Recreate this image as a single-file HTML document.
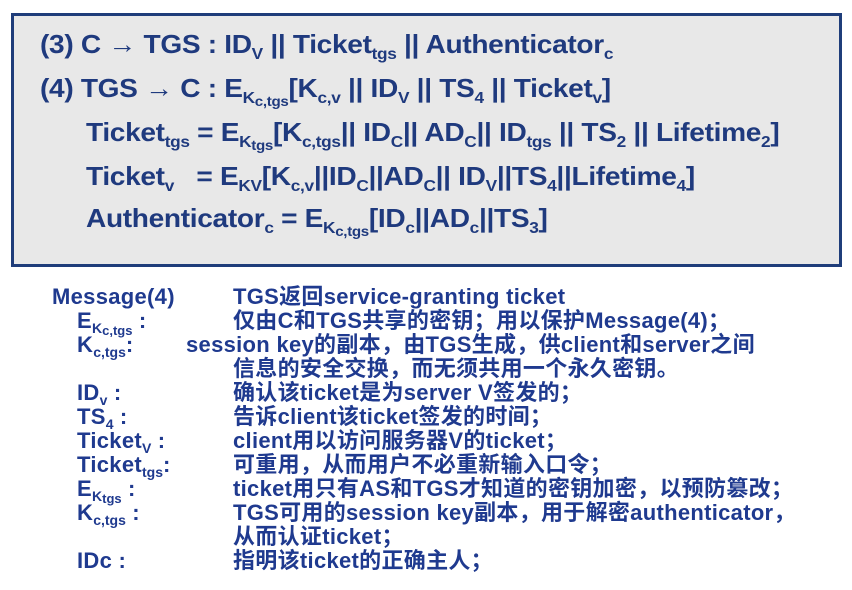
<!DOCTYPE html>
<html><head><meta charset="utf-8"><style>
body{margin:0;width:852px;height:590px;background:#fff;overflow:hidden;position:relative;font-family:"Liberation Sans","Noto Sans CJK SC",sans-serif;}
.box{position:absolute;left:11px;top:13px;width:825px;height:248px;background:#e8e8e8;border:3px solid #1f3d7a;}
.f{position:absolute;font-weight:bold;color:#1f3a7e;font-size:26px;white-space:nowrap;transform-origin:0 50%;transform:scaleX(1.08);letter-spacing:-0.3px;}
.f sub{font-size:16px;vertical-align:-6px;}
.f sub sub{font-size:14px;vertical-align:-3px;}
.t{position:absolute;font-weight:bold;color:#1f3a8f;font-size:22px;white-space:nowrap;line-height:24px;letter-spacing:0.3px;}
.t sub{font-size:14px;vertical-align:-5px;letter-spacing:0}
.t sub sub{font-size:13px;vertical-align:-2px}
</style></head><body>
<div class="box"></div>
<div class="f" style="left:40px;top:29px">(3) C → TGS : ID<sub>V</sub> || Ticket<sub>tgs</sub> || Authenticator<sub>c</sub></div>
<div class="f" style="left:40px;top:73px">(4) TGS → C : E<sub>K<sub>c,tgs</sub></sub>[K<sub>c,v</sub> || ID<sub>V</sub> || TS<sub>4</sub> || Ticket<sub>v</sub>]</div>
<div class="f" style="left:86px;top:117px">Ticket<sub>tgs</sub> = E<sub>K<sub>tgs</sub></sub>[K<sub>c,tgs</sub>|| ID<sub>C</sub>|| AD<sub>C</sub>|| ID<sub>tgs</sub> || TS<sub>2</sub> || Lifetime<sub>2</sub>]</div>
<div class="f" style="left:86px;top:161px">Ticket<sub>v</sub> &nbsp; = E<sub>KV</sub>[K<sub>c,v</sub>||ID<sub>C</sub>||AD<sub>C</sub>|| ID<sub>V</sub>||TS<sub>4</sub>||Lifetime<sub>4</sub>]</div>
<div class="f" style="left:86px;top:203px">Authenticator<sub>c</sub> = E<sub>K<sub>c,tgs</sub></sub>[ID<sub>c</sub>||AD<sub>c</sub>||TS<sub>3</sub>]</div>

<div class="t" style="left:52px;top:285px">Message(4)</div>
<div class="t" style="left:233px;top:285px">TGS返回service-granting ticket</div>
<div class="t" style="left:77px;top:309px">E<sub>K<sub>c,tgs</sub></sub> :</div>
<div class="t" style="left:233px;top:309px">仅由C和TGS共享的密钥；用以保护Message(4)；</div>
<div class="t" style="left:77px;top:333px">K<sub>c,tgs</sub>:</div>
<div class="t" style="left:186px;top:333px">session key的副本，由TGS生成，供client和server之间</div>
<div class="t" style="left:233px;top:357px">信息的安全交换，而无须共用一个永久密钥。</div>
<div class="t" style="left:77px;top:381px">ID<sub>v</sub> :</div>
<div class="t" style="left:233px;top:381px">确认该ticket是为server V签发的；</div>
<div class="t" style="left:77px;top:405px">TS<sub>4</sub> :</div>
<div class="t" style="left:233px;top:405px">告诉client该ticket签发的时间；</div>
<div class="t" style="left:77px;top:429px">Ticket<sub>V</sub> :</div>
<div class="t" style="left:233px;top:429px">client用以访问服务器V的ticket；</div>
<div class="t" style="left:77px;top:453px">Ticket<sub>tgs</sub>:</div>
<div class="t" style="left:233px;top:453px">可重用，从而用户不必重新输入口令；</div>
<div class="t" style="left:77px;top:477px">E<sub>K<sub>tgs</sub></sub> :</div>
<div class="t" style="left:233px;top:477px">ticket用只有AS和TGS才知道的密钥加密，以预防篡改；</div>
<div class="t" style="left:77px;top:501px">K<sub>c,tgs</sub> :</div>
<div class="t" style="left:233px;top:501px">TGS可用的session key副本，用于解密authenticator，</div>
<div class="t" style="left:233px;top:525px">从而认证ticket；</div>
<div class="t" style="left:77px;top:549px">IDc :</div>
<div class="t" style="left:233px;top:549px">指明该ticket的正确主人；</div>
</body></html>
